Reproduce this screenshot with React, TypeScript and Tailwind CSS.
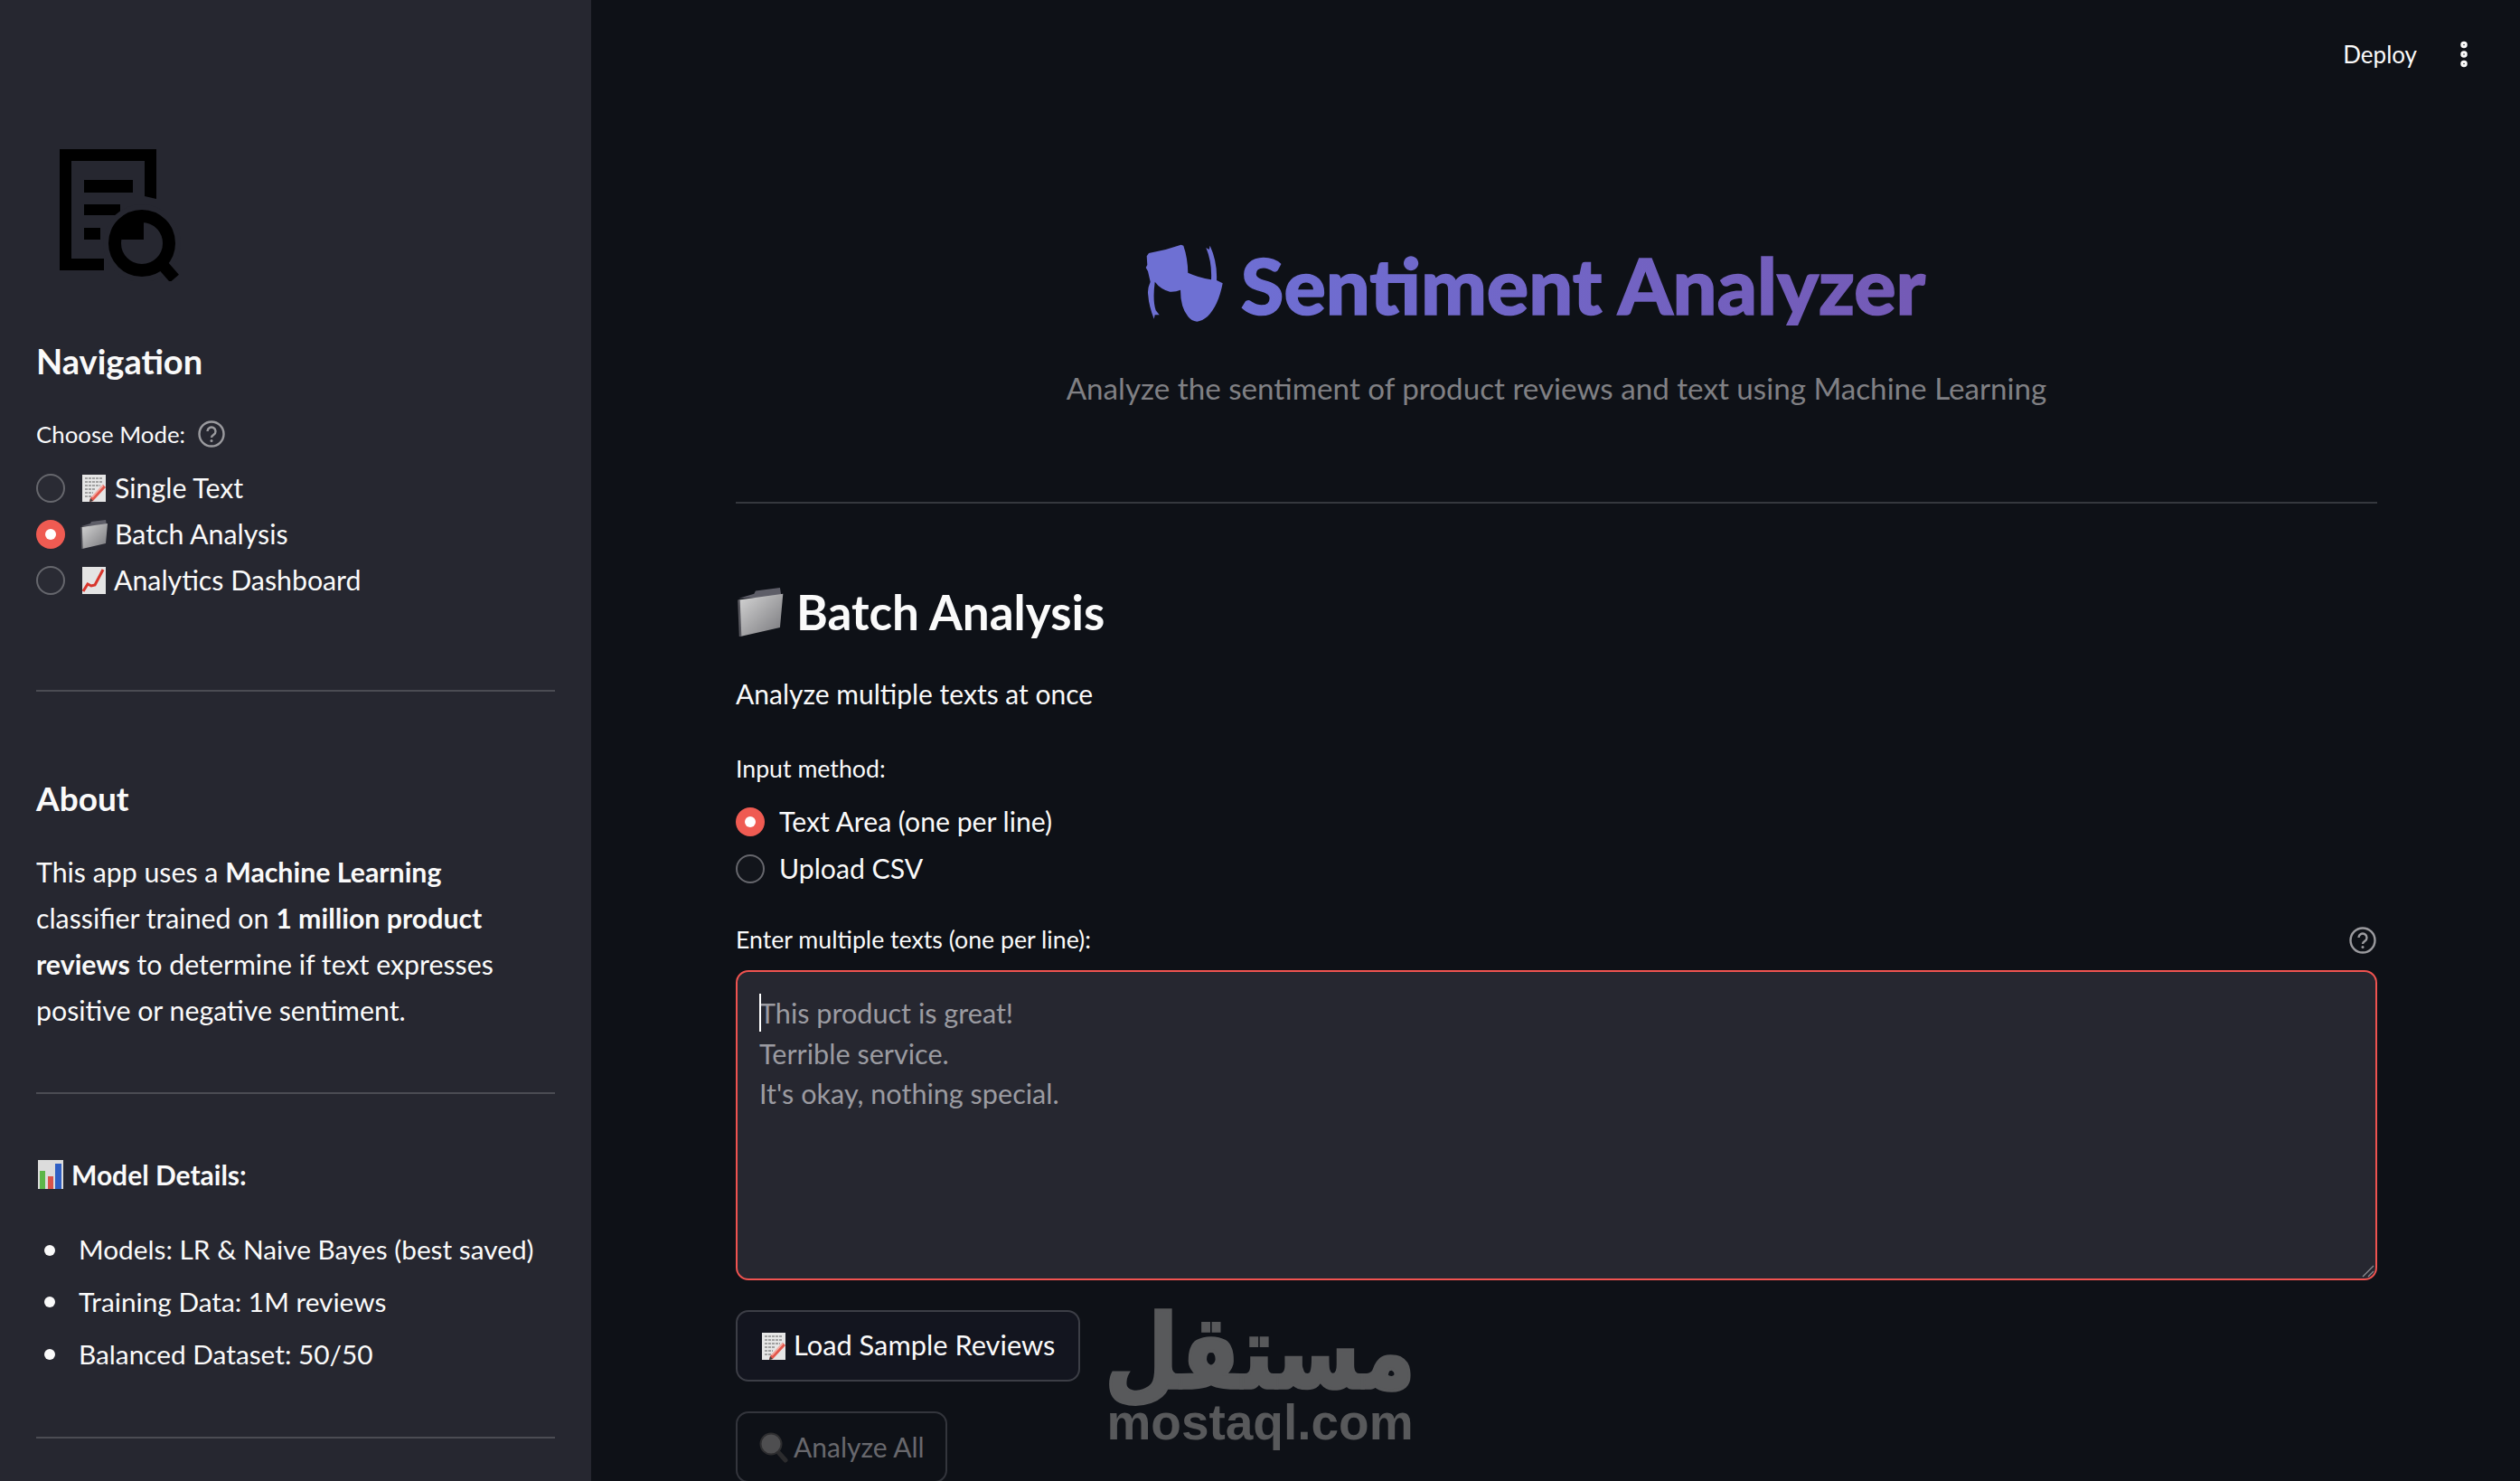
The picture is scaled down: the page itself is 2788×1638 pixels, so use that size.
import { Ellipsis } from 'lucide-react';

function MemoEmoji({ className }: { className: string }) {
  return (
    <svg viewBox="0 0 28 32" className={className}>
      <rect x="1" y="1" width="26" height="30" fill="#e6e6e6" />
      <path d="M4 5h20M4 9h20M4 13h17M4 17h12M4 21h9M4 25h7" stroke="#8a8a8a" strokeWidth="1.4" strokeDasharray="3 1" />
      <path d="M10 27l14-15 3 3-14 15-4 1z" fill="#e2574c" />
      <path d="M12 26l12-13" stroke="#f7b0a6" strokeWidth="1.5" />
      <path d="M9 31l1-4 3 3z" fill="#3b3b3b" />
    </svg>
  );
}

function FolderEmoji({ className, id }: { className: string; id: string }) {
  return (
    <svg viewBox="0 0 30 32" className={className}>
      <defs>
        <linearGradient id={id} x1="0" y1="0" x2="1" y2="1">
          <stop offset="0" stopColor="#d6d6d6" />
          <stop offset="1" stopColor="#77777b" />
        </linearGradient>
      </defs>
      <path d="M1 7l10-3 1-2 16-2 1 6z" fill="#5e5e68" />
      <path d="M1 8l29-4-2 22L2 32z" fill={`url(#${id})`} />
      <path d="M1 8l1 24" stroke="#55555c" strokeWidth="1.5" />
    </svg>
  );
}

function ChartUpEmoji({ className }: { className: string }) {
  return (
    <svg viewBox="0 0 28 32" className={className}>
      <rect x="1" y="1" width="26" height="30" fill="#e4e4e4" />
      <path d="M2 28l5-8 4 2 4-1L24 4" fill="none" stroke="#d8352c" strokeWidth="3" />
    </svg>
  );
}

function BarsEmoji({ className }: { className: string }) {
  return (
    <svg viewBox="0 0 28 32" className={className}>
      <rect x="0" y="0" width="28" height="32" fill="#dcdcdc" />
      <rect x="2" y="12" width="6" height="20" fill="#5cb648" />
      <rect x="11" y="18" width="6" height="14" fill="#d9534a" />
      <rect x="19" y="4" width="7" height="28" fill="#2f5fc4" />
    </svg>
  );
}

function SearchEmoji({ className }: { className: string }) {
  return (
    <svg viewBox="0 0 32 34" className={className}>
      <path d="M20 21l9 10" stroke="#2b2b2d" strokeWidth="5" strokeLinecap="round" />
      <circle cx="13" cy="13" r="11.5" fill="#4e4e50" stroke="#2e2e30" strokeWidth="2" />
    </svg>
  );
}

function HelpIcon({ className }: { className: string }) {
  return (
    <svg viewBox="0 0 30 30" className={className} fill="none" stroke="#9a9a9e" strokeWidth="2.4">
      <circle cx="15" cy="15" r="13.5" />
      <path d="M10.5 12a4.5 4.5 0 1 1 6.8 3.9c-1.5.9-2.3 1.6-2.3 3.2" strokeWidth="2.4" />
      <circle cx="15" cy="22.6" r="1.5" fill="#9a9a9e" stroke="none" />
    </svg>
  );
}

function Radio({ checked }: { checked?: boolean }) {
  return checked ? (
    <span className="flex h-8 w-8 shrink-0 items-center justify-center rounded-full bg-[#ef5b52]">
      <span className="h-3 w-3 rounded-full bg-white" />
    </span>
  ) : (
    <span className="h-8 w-8 shrink-0 rounded-full border-2 border-[#66676d] bg-white/[0.02]" />
  );
}

function Bullet({ children }: { children: string }) {
  return (
    <li className="flex h-[57.6px] items-center">
      <span className="ml-[9px] mr-[26px] h-[12px] w-[12px] rounded-full bg-[#fafafa]" />
      {children}
    </li>
  );
}

function Logo() {
  return (
    <svg viewBox="0 0 134 146" className="ml-[66px] mt-[165px] h-[146px] w-[134px]">
      <path d="M0 0h107v55l-13-3V13H13v108h36v13H0z" fill="#000" />
      <path d="M27 34h54v14H27zM27 61h40v12H27zM27 87h18v13H27z" fill="#000" />
      <circle cx="91" cy="104" r="43" fill="#262730" />
      <circle cx="91" cy="104" r="30" fill="none" stroke="#000" strokeWidth="14" />
      <path d="M68 100a25 25 0 0 1 25-24v24z" fill="#000" />
      <path d="M113 127l14 16" stroke="#000" strokeWidth="13" />
    </svg>
  );
}

export default function App() {
  return (
    <div className="relative flex h-[1638px] w-[2788px] items-start overflow-hidden bg-[#0e1117] text-[#fafafa] [font-family:Lato,sans-serif]">
      {/* Sidebar */}
      <aside className="flex h-full w-[654px] shrink-0 flex-col bg-[#262730]">
        <Logo />
        <div className="mx-[40px] flex flex-col">
          <h3 className="mt-[63px] flex h-[50px] items-center text-[38px] font-bold">Navigation</h3>
          <div className="mt-[36px] flex h-[40px] items-center gap-[14px] text-[25.8px]">
            Choose Mode:
            <HelpIcon className="h-[30px] w-[30px]" />
          </div>
          <div className="mt-[14px] flex flex-col text-[30.3px]">
            <div className="flex h-[51px] items-center">
              <Radio />
              <MemoEmoji className="ml-[18px] mr-[9px] h-[32px] w-[28px]" />
              Single Text
            </div>
            <div className="flex h-[51px] items-center">
              <Radio checked />
              <FolderEmoji id="folderNav" className="ml-[17px] mr-[8px] h-[32px] w-[30px]" />
              Batch Analysis
            </div>
            <div className="flex h-[51px] items-center">
              <Radio />
              <ChartUpEmoji className="ml-[18px] mr-[8px] h-[32px] w-[28px]" />
              Analytics Dashboard
            </div>
          </div>
          <hr className="mt-[96px] h-[2px] border-0 bg-[#4b4c53]" />
          <h3 className="mt-[93px] flex h-[50px] items-center text-[37px] font-bold">About</h3>
          <p className="mt-[31px] text-[30.3px] leading-[51px]">
            This app uses a <strong>Machine Learning</strong>
            <br />
            classifier trained on <strong>1 million product</strong>
            <br />
            <strong>reviews</strong> to determine if text expresses
            <br />
            positive or negative sentiment.
          </p>
          <hr className="mt-[65px] h-[2px] border-0 bg-[#4b4c53]" />
          <div className="mt-[69px] flex h-[40px] items-center text-[30px] font-bold">
            <BarsEmoji className="ml-[2px] mr-[9px] h-[32px] w-[28px]" />
            Model Details:
          </div>
          <ul className="mt-[35px] flex flex-col text-[29.8px]">
            <Bullet>Models: LR &amp; Naive Bayes (best saved)</Bullet>
            <Bullet>Training Data: 1M reviews</Bullet>
            <Bullet>Balanced Dataset: 50/50</Bullet>
          </ul>
          <hr className="mt-[62px] h-[2px] border-0 bg-[#4b4c53]" />
        </div>
      </aside>

      {/* Toolbar */}
      <div className="absolute right-[44px] top-[38px] flex h-[44px] items-center gap-[34px]">
        <span className="text-[26px]">Deploy</span>
        <Ellipsis className="h-[36px] w-[36px] rotate-90" strokeWidth={3} />
      </div>

      {/* Main */}
      <main className="ml-[160px] flex w-[1816px] flex-col pt-[270px]">
        <div className="flex h-[90px] items-center justify-center bg-gradient-to-r from-[#667eea] to-[#764ba2] bg-clip-text pr-[47px] text-[86.5px] font-black text-transparent [-webkit-text-stroke:1.5px_transparent]">
          <svg viewBox="11 10 87 87" className="mb-[4px] mr-[19px] h-[87px] w-[87px]">
            <path
              d="M50.700 10.700Q33 17 15 20L12.700 23.300L13.300 33L11.700 36L14 40L16.700 51.700Q13 60 14.300 66.700Q15 78 20.700 92.700L21.700 88.300L26.700 88.300L22.700 83.300Q19 72 21.700 51.700Q28 60 38.300 62.700Q45 63 50 60.700Q50 80 58.300 90Q62 95 68.300 95.700Q74 95 80 90Q92 78 96.700 53.300L90 50Q91 30 82.700 11.700L81.700 16L78.300 14Q85 30 84 49.300Q70 47 58.300 41.700Q58 25 53.300 11.700Z"
              fill="#6e70d3"
            />
          </svg>
          Sentiment Analyzer
        </div>
        <p className="mt-[45px] flex h-[50px] items-center justify-center text-[33.2px] text-[#808084]">
          Analyze the sentiment of product reviews and text using Machine Learning
        </p>
        <hr className="mt-[100px] h-[2px] border-0 bg-[#35383e]" />
        <h2 className="mt-[90px] flex h-[60px] items-center text-[53px] font-bold">
          <FolderEmoji id="folderHead" className="mr-[13px] h-[54px] w-[54px]" />
          Batch Analysis
        </h2>
        <p className="mt-[40px] flex h-[40px] items-center text-[30px]">Analyze multiple texts at once</p>
        <label className="mt-[43px] flex h-[40px] items-center text-[26.7px]">Input method:</label>
        <div className="mt-[13px] flex flex-col text-[30.2px]">
          <div className="flex h-[52px] items-center gap-[16px]">
            <Radio checked />
            Text Area (one per line)
          </div>
          <div className="flex h-[52px] items-center gap-[16px]">
            <Radio />
            Upload CSV
          </div>
        </div>
        <div className="mt-[32px] flex h-[40px] items-center justify-between text-[26.7px]">
          <label>Enter multiple texts (one per line):</label>
          <HelpIcon className="mr-[1px] mt-[2px] h-[30px] w-[30px]" />
        </div>
        <div className="relative mt-[14px] h-[343px]">
          <textarea
            readOnly
            className="block h-full w-full resize-none rounded-[14px] border-2 border-[#ef5350] bg-[#262730] px-[24px] pb-[24px] pt-[24px] text-[30.6px] leading-[44.6px] outline-none placeholder:text-[#9b9ba1]"
            placeholder={"This product is great!\nTerrible service.\nIt's okay, nothing special."}
          />
          <span className="absolute left-[26px] top-[26px] h-[42px] w-[2px] bg-white" />
          <svg viewBox="0 0 14 14" className="absolute bottom-[3px] right-[3px] h-[14px] w-[14px]" stroke="#8b8b90" strokeWidth="1.300">
            <path d="M1 13L13 1M7 13l6-6" />
          </svg>
        </div>
        <div className="mt-[33px] flex">
          <button className="flex h-[79px] items-center gap-[8px] rounded-[14px] border-2 border-[#3c3e46] bg-[#13151f] px-[26px] text-[30.8px]">
            <MemoEmoji className="h-[32px] w-[28px]" />
            Load Sample Reviews
          </button>
        </div>
        <div className="mt-[33px] flex">
          <button className="flex h-[79px] items-center gap-[6px] rounded-[14px] border-2 border-[#33353c] pl-[24px] pr-[23px] text-[30px] text-[#68686d]">
            <SearchEmoji className="h-[34px] w-[32px]" />
            Analyze All
          </button>
        </div>
      </main>

      {/* Watermark */}
      <div className="absolute left-[1226px] top-[1455px] flex w-[336px] flex-col items-center font-bold text-[#58595b]">
        <span dir="rtl" className="h-[84px] scale-y-[1.2] text-[94px] leading-[84px] [-webkit-text-stroke:3px_#58595b] [font-family:'DejaVu_Sans',sans-serif]">
          مستقل
        </span>
        <span className="mt-[9px] text-[55px] leading-[50px] [font-family:'Liberation_Sans',sans-serif]">mostaql.com</span>
      </div>
    </div>
  );
}
